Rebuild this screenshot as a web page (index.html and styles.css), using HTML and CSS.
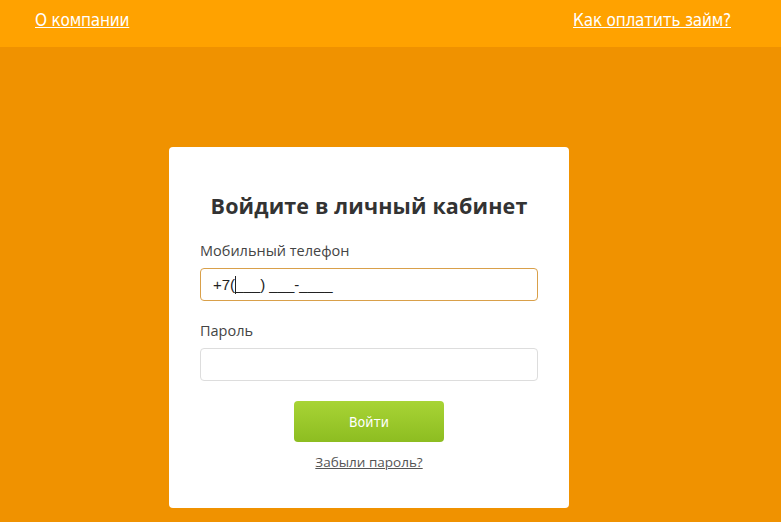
FILE: index.html
```html
<!DOCTYPE html>
<html lang="ru">
<head>
<meta charset="utf-8">
<title>Вход в личный кабинет</title>
<link rel="stylesheet" href="styles.css">
</head>
<body>
<header class="topbar">
  <a class="toplink" href="#">О компании</a>
  <a class="toplink" href="#">Как оплатить займ?</a>
</header>
<main class="page">
  <form class="card">
    <h1 class="title">Войдите в личный кабинет</h1>
    <label class="label">Мобильный телефон</label>
    <div class="input input-active">+7(<span class="caret"></span>___) ___-____</div>
    <label class="label label-second">Пароль</label>
    <div class="input"></div>
    <div class="actions">
      <button type="button" class="btn">Войти</button>
      <a class="forgot" href="#">Забыли пароль?</a>
    </div>
  </form>
</main>
</body>
</html>
```
FILE: styles.css
```css
html, body {
  margin: 0;
  padding: 0;
  height: 100%;
}
body {
  background: #f09200;
  font-family: "Open Sans", "Noto Sans", sans-serif;
}
.topbar {
  height: 47px;
  background: #ffa200;
  display: flex;
  justify-content: space-between;
  align-items: flex-start;
  padding: 0 50px 0 35px;
  box-sizing: border-box;
}
.toplink {
  color: #fff;
  font-family: "DejaVu Sans Condensed", "DejaVu Sans", sans-serif;
  font-stretch: condensed;
  font-size: 17px;
  line-height: 20px;
  margin-top: 10px;
  text-decoration: underline;
  letter-spacing: -0.2px;
}
.page {
  display: flex;
  justify-content: flex-start;
  padding-top: 100px;
  padding-left: 169px;
}
.card {
  width: 400px;
  height: 361px;
  box-sizing: border-box;
  background: #fff;
  border-radius: 4px;
  padding: 46px 31px 0;
  display: flex;
  flex-direction: column;
}
.title {
  margin: 0 0 22px;
  font-family: "Open Sans", sans-serif;
  font-weight: 700;
  font-size: 21.5px;
  line-height: 26px;
  color: #333;
  text-align: center;
  letter-spacing: 0.15px;
}
.label {
  display: block;
  font-size: 14.5px;
  line-height: 20px;
  color: #444;
  margin-bottom: 7px;
}
.label-second {
  margin-top: 20px;
}
.input {
  height: 33px;
  box-sizing: border-box;
  border: 1px solid #ddd;
  border-radius: 4px;
  padding: 0 12px;
  font-family: "Liberation Sans", Arial, sans-serif;
  font-size: 15px;
  line-height: 31px;
  color: #222;
  display: flex;
  align-items: center;
}
.input-active {
  border-color: #d9a04a;
}
.caret {
  display: inline-block;
  width: 1px;
  height: 18px;
  background: #222;
  margin-right: -1px;
}
.actions {
  display: flex;
  flex-direction: column;
  align-items: center;
  margin-top: 20px;
}
.btn {
  width: 150px;
  height: 41px;
  border: none;
  border-radius: 4px;
  background: linear-gradient(#a8d435, #8dbd21);
  color: #fff;
  font-family: "DejaVu Sans Condensed", "DejaVu Sans", sans-serif;
  font-stretch: condensed;
  font-size: 14px;
  padding: 0;
  cursor: pointer;
}
.forgot {
  margin-top: 10px;
  font-size: 13.5px;
  line-height: 20px;
  color: #555;
  text-decoration: underline;
}
```
